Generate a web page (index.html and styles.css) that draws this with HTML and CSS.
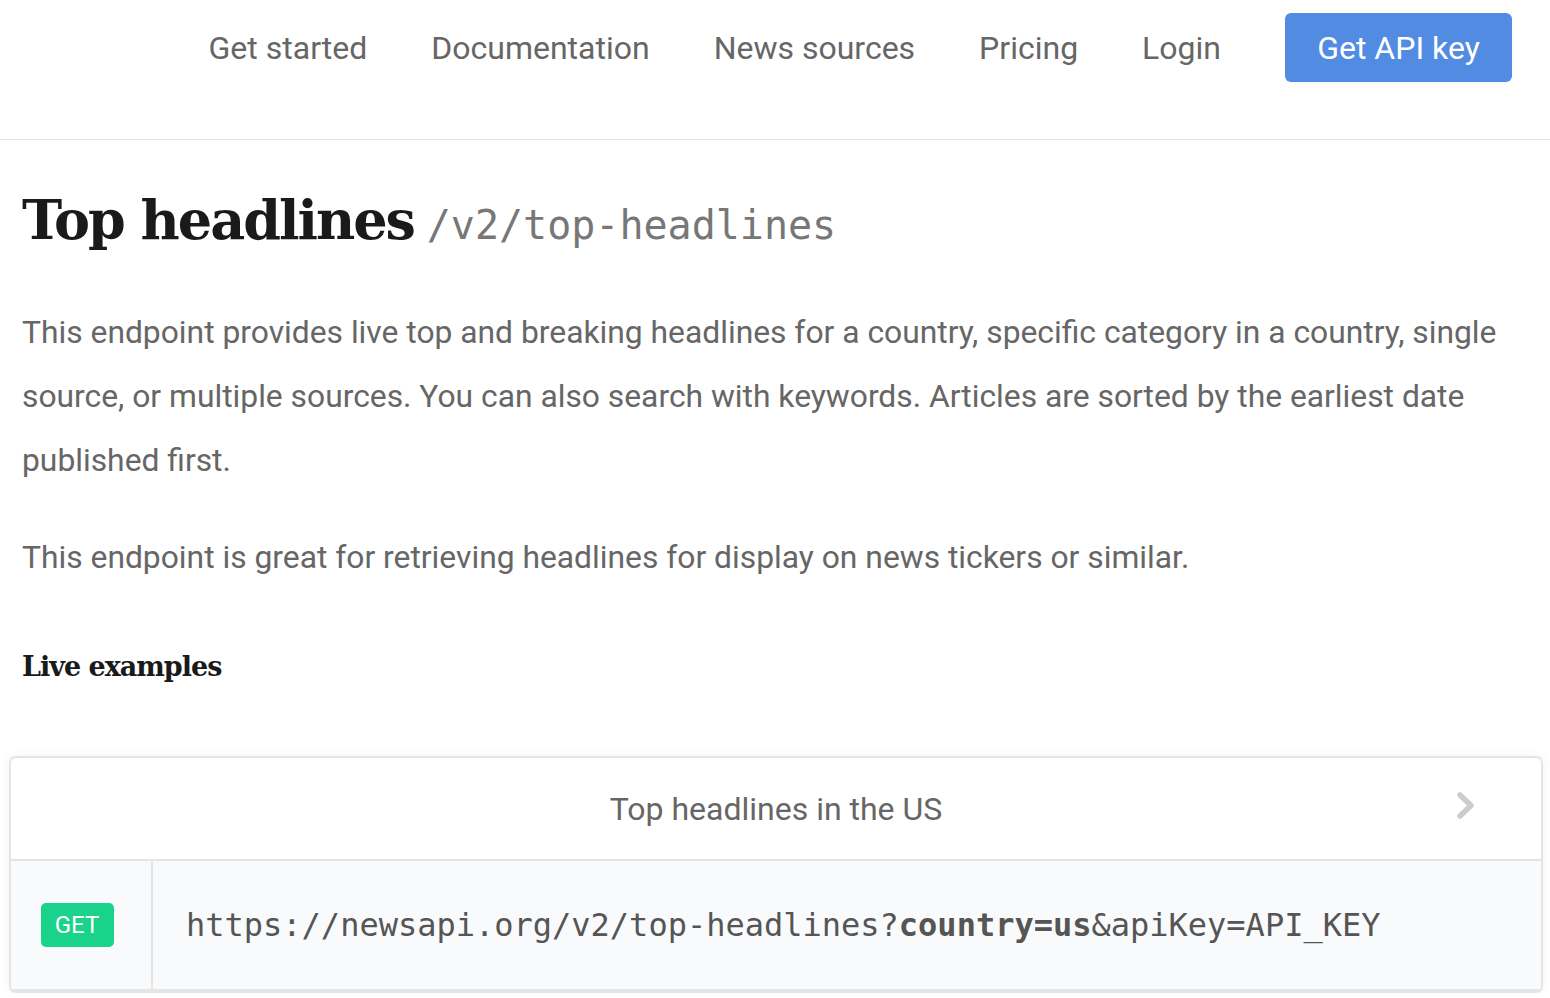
FILE: index.html
```html
<!DOCTYPE html>
<html>
<head>
<meta charset="utf-8">
<link rel="stylesheet" href="styles.css">
</head>
<body>
<header class="nav">
  <a class="nav-link">Get started</a>
  <a class="nav-link">Documentation</a>
  <a class="nav-link">News sources</a>
  <a class="nav-link">Pricing</a>
  <a class="nav-link">Login</a>
  <a class="nav-btn">Get API key</a>
</header>
<main class="content">
  <h1 class="title">Top headlines <code class="endpoint">/v2/top-headlines</code></h1>
  <p class="para">This endpoint provides live top and breaking headlines for a country, specific category in a country, single source, or multiple sources. You can also search with keywords. Articles are sorted by the earliest date published first.</p>
  <p class="para second">This endpoint is great for retrieving headlines for display on news tickers or similar.</p>
  <h3 class="sub">Live examples</h3>
</main>
<section class="card">
  <div class="card-head">
    <span class="card-title">Top headlines in the US</span>
    <svg class="chev" width="22" height="32" viewBox="0 0 22 32"><path d="M5 5 L16 15.5 L5 26" fill="none" stroke="#cccccc" stroke-width="5.5" stroke-linecap="round" stroke-linejoin="round"/></svg>
  </div>
  <div class="card-row">
    <div class="method"><span class="badge">GET</span></div>
    <div class="url">https://newsapi.org/v2/top-headlines?<b>country=us</b>&amp;apiKey=API_KEY</div>
  </div>
</section>
</body>
</html>
```
FILE: styles.css
```css
html, body { margin: 0; padding: 0; background: #fff; }
body { font-family: Roboto, "Liberation Sans", sans-serif; color: #666; overflow: hidden; }
.nav {
  height: 139px;
  border-bottom: 1px solid #e3e3e3;
  display: flex;
  align-items: center;
  justify-content: flex-end;
  padding-right: 38px;
}
.nav-link { font-size: 32px; color: #666; margin-right: 64px; position: relative; top: -22px; }
.nav-btn {
  font-size: 32px; color: #fff; background: #528be2; border-radius: 6px;
  width: 227px; height: 69px; display: flex; align-items: center; justify-content: center;
  position: relative; top: -22px;
}
.content { padding: 0 22px; }
.title {
  margin: 42px 0 0; font-family: "DejaVu Serif", serif; font-weight: bold; font-size: 54px;
  color: #1a1a1a; letter-spacing: -2px; line-height: 76px;
}
.endpoint { font-family: "DejaVu Sans Mono", monospace; font-weight: normal; font-size: 40px; color: #777; letter-spacing: 0; margin-left: -4px; }
.para { font-size: 31.8px; line-height: 64px; margin: 37px 0 0; color: #666; }
.para.second { margin-top: 33px; }
.sub { font-family: "DejaVu Serif", serif; font-weight: bold; font-size: 27px; color: #1a1a1a; margin: 62px 0 0; letter-spacing: -1px; }
.card {
  margin: 74px 7px 0 9px; border: 2px solid #e4e4e4; border-radius: 7px;
  box-shadow: 0 0 10px rgba(0,0,0,0.06); overflow: hidden;
}
.card-head { height: 101px; display: flex; align-items: center; justify-content: center; position: relative; border-bottom: 2px solid #e4e4e4; background: #fff; }
.card-title { font-size: 32px; color: #666; }
.chev { position: absolute; right: 64px; top: 32px; }
.card-row { display: flex; height: 128px; background: #f9fafc; border-bottom: 2px solid #e4e4e4; }
.method { width: 142px; border-right: 2px solid #e4e4e4; display: flex; align-items: center; justify-content: center; padding-right: 8px; box-sizing: border-box; }
.badge { background: #19d38a; color: #fff; font-size: 24px; border-radius: 5px; width: 73px; height: 44px; display: flex; align-items: center; justify-content: center; }
.url { font-family: "DejaVu Sans Mono", monospace; font-size: 32px; color: #555; display: flex; align-items: center; padding-left: 33px; white-space: pre; }
.url b { font-weight: bold; }
```
